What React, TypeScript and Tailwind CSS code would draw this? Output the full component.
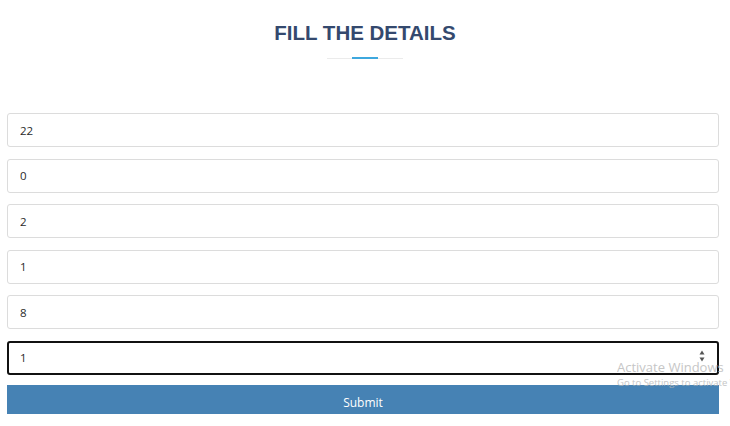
import { useState } from "react";

const FIELDS = ["22", "0", "2", "1", "8"];

export default function App() {
  const [values, setValues] = useState(FIELDS);
  const [last, setLast] = useState("1");

  return (
    <div className="relative h-[426px] w-[730px] overflow-hidden bg-white font-['Open_Sans',sans-serif]">
      <div className="flex flex-col items-center pt-[20px]">
        <h1 className="font-['Liberation_Sans',Arial,sans-serif] text-[20.5px] font-bold leading-[26px] text-[#34496e]">
          FILL THE DETAILS
        </h1>
        <div className="mt-[11px] flex h-[2px] w-[76px] items-center bg-[#ebebeb] [background-clip:content-box] py-[0.5px]">
          <div className="ml-[25px] h-[2px] w-[26px] bg-[#3ea8de]" />
        </div>
      </div>

      <form className="mt-[54px] flex flex-col gap-[11.5px] pl-[7px] pr-[11px]">
        {values.map((v, i) => (
          <input
            key={i}
            type="text"
            value={v}
            onChange={(e) => {
              const next = [...values];
              next[i] = e.target.value;
              setValues(next);
            }}
            className="h-[34px] w-full rounded-[3px] border border-[#dcdcdc] px-[12px] text-[11.5px] text-[#2a2a2a] outline-none"
          />
        ))}
        <div className="relative">
          <input
            type="text"
            value={last}
            onChange={(e) => setLast(e.target.value)}
            className="h-[34px] w-full rounded-[3px] border-2 border-[#111] px-[11px] text-[11.5px] text-[#2a2a2a] outline-none"
          />
          <div className="pointer-events-none absolute right-[14px] top-[9px] flex flex-col items-center gap-[2px]">
            <svg width="6" height="5" viewBox="0 0 6 5">
              <path d="M3 0.5 L5.5 4.5 L0.5 4.5 Z" fill="#555" />
            </svg>
            <svg width="6" height="5" viewBox="0 0 6 5">
              <path d="M0.5 0.5 L5.5 0.5 L3 4.5 Z" fill="#555" />
            </svg>
          </div>
        </div>
        <button
          type="button"
          className="-mt-[1px] h-[29px] w-full bg-[#4682b4] pt-[5px] text-[12px] leading-[26px] text-white"
        >
          Submit
        </button>
      </form>

      <div className="pointer-events-none absolute left-[617px] top-[358px] whitespace-nowrap font-['Open_Sans',sans-serif] text-[#b8b8b8]">
        <div className="text-[13px] leading-[18px] opacity-80">Activate Windows</div>
        <div className="text-[9.5px] leading-[14px] opacity-80">Go to Settings to activate Windows.</div>
      </div>
    </div>
  );
}
